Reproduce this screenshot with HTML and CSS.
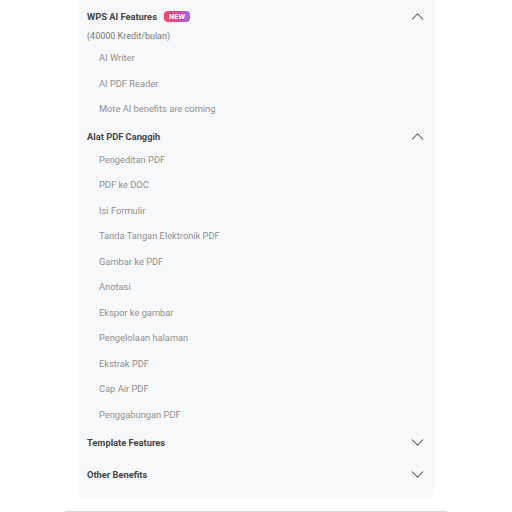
FILE: index.html
```html
<!DOCTYPE html>
<html>
<head>
<meta charset="utf-8">
<link rel="stylesheet" href="styles.css">
</head>
<body>
<div class="page">
  <div class="card">
    <div class="section open">
      <div class="head first">
        <span class="title">WPS AI Features</span>
        <span class="badge">NEW</span>
        <svg class="chev" viewBox="0 0 14 8"><path d="M1 7 L7 1 L13 7"/></svg>
      </div>
      <div class="sub">(40000 Kredit/bulan)</div>
      <ul class="items">
        <li>AI Writer</li>
        <li>AI PDF Reader</li>
        <li>More AI benefits are coming</li>
      </ul>
    </div>
    <div class="section open">
      <div class="head">
        <span class="title">Alat PDF Canggih</span>
        <svg class="chev" viewBox="0 0 14 8"><path d="M1 7 L7 1 L13 7"/></svg>
      </div>
      <ul class="items">
        <li>Pengeditan PDF</li>
        <li>PDF ke DOC</li>
        <li>Isi Formulir</li>
        <li>Tanda Tangan Elektronik PDF</li>
        <li>Gambar ke PDF</li>
        <li>Anotasi</li>
        <li>Ekspor ke gambar</li>
        <li>Pengelolaan halaman</li>
        <li>Ekstrak PDF</li>
        <li>Cap Air PDF</li>
        <li>Penggabungan PDF</li>
      </ul>
    </div>
    <div class="section closed">
      <div class="head">
        <span class="title">Template Features</span>
        <svg class="chev" viewBox="0 0 14 8"><path d="M1 1 L7 7 L13 1"/></svg>
      </div>
    </div>
    <div class="section closed">
      <div class="head">
        <span class="title">Other Benefits</span>
        <svg class="chev" viewBox="0 0 14 8"><path d="M1 1 L7 7 L13 1"/></svg>
      </div>
    </div>
  </div>
  <div class="rule"></div>
</div>
</body>
</html>
```
FILE: styles.css
```css
html, body {
  margin: 0;
  padding: 0;
  background: #ffffff;
  font-family: Roboto, "Noto Sans", Arial, sans-serif;
}
.page {
  width: 512px;
  height: 512px;
  overflow: hidden;
}
.card {
  margin-left: 78px;
  width: 357px;
  background: #f8f9fb;
  border-radius: 0 0 8px 8px;
  padding: 0 0 6.25px 0;
}
.head {
  display: flex;
  align-items: center;
  height: 16px;
  padding: 6.75px 11px 2.25px 9px;
}
.head.first {
  padding-top: 8px;
  padding-bottom: 0;
}
.closed .head {
  padding-top: 7.25px;
  padding-bottom: 8.75px;
}
.title {
  font-size: 9.3px;
  font-weight: 700;
  color: #444;
}
.badge {
  margin-left: 7px;
  height: 11px;
  width: 26px;
  border-radius: 4px;
  background: linear-gradient(90deg, #f0466a 0%, #d64f9a 55%, #a760ee 100%);
  color: #fff;
  font-size: 7.5px;
  font-weight: 700;
  line-height: 11px;
  text-align: center;
}
.chev {
  margin-left: auto;
  width: 13px;
  height: 7px;
  fill: none;
  stroke: #6a6a6a;
  stroke-width: 1.3;
  stroke-linecap: round;
  stroke-linejoin: round;
}
.sub {
  padding: 4px 0 1.25px 9px;
  font-size: 9px;
  line-height: 16px;
  color: #777;
}
.items {
  list-style: none;
  margin: 0;
  padding: 0 0 0 21px;
}
.items li {
  height: 25.5px;
  line-height: 25.5px;
  font-size: 9.3px;
  color: #909090;
}
.rule {
  margin: 13.5px 0 0 65px;
  width: 382px;
  height: 1px;
  background: #dcdcdc;
}
```
